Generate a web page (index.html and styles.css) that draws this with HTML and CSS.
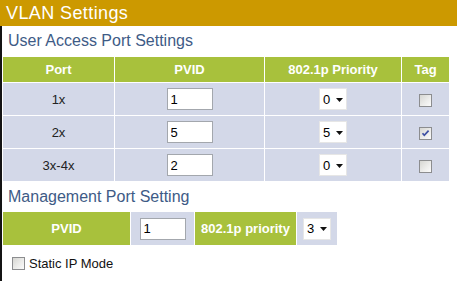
FILE: index.html
```html
<!DOCTYPE html>
<html>
<head>
<meta charset="utf-8">
<link rel="stylesheet" href="styles.css">
</head>
<body>
<div class="page-title">VLAN Settings</div>
<div class="content">
  <div class="section-title">User Access Port Settings</div>
  <table class="grid">
    <tr>
      <th class="c-port">Port</th>
      <th class="c-pvid">PVID</th>
      <th class="c-prio">802.1p Priority</th>
      <th class="c-tag">Tag</th>
    </tr>
    <tr>
      <td>1x</td>
      <td><input class="txt" type="text" value="1"></td>
      <td><div class="sel"><span>0</span><svg width="7" height="4" viewBox="0 0 7 4"><path d="M0 0H7L3.5 4Z" fill="#111"/></svg></div></td>
      <td><span class="chk"></span></td>
    </tr>
    <tr>
      <td>2x</td>
      <td><input class="txt" type="text" value="5"></td>
      <td><div class="sel"><span>5</span><svg width="7" height="4" viewBox="0 0 7 4"><path d="M0 0H7L3.5 4Z" fill="#111"/></svg></div></td>
      <td><span class="chk"><svg width="11" height="11" viewBox="0 0 11 11"><path d="M2.5 5.2L4.3 7.3L8.6 2.6" fill="none" stroke="#3d4fa3" stroke-width="1.7"/></svg></span></td>
    </tr>
    <tr>
      <td>3x-4x</td>
      <td><input class="txt" type="text" value="2"></td>
      <td><div class="sel"><span>0</span><svg width="7" height="4" viewBox="0 0 7 4"><path d="M0 0H7L3.5 4Z" fill="#111"/></svg></div></td>
      <td><span class="chk"></span></td>
    </tr>
  </table>
  <div class="section-title mgmt">Management Port Setting</div>
  <table class="grid mgmt-table">
    <tr>
      <th class="m-pvid">PVID</th>
      <td class="m-input"><input class="txt" type="text" value="1"></td>
      <th class="m-prio">802.1p priority</th>
      <td class="m-sel"><div class="sel"><span>3</span><svg width="7" height="4" viewBox="0 0 7 4"><path d="M0 0H7L3.5 4Z" fill="#111"/></svg></div></td>
    </tr>
  </table>
  <label class="static-ip"><span class="chk"></span><span class="static-label">Static IP Mode</span></label>
</div>
</body>
</html>
```
FILE: styles.css
```css
html, body {
  margin: 0;
  padding: 0;
  background: #fff;
  font-family: "Liberation Sans", Arial, sans-serif;
  width: 457px;
  height: 281px;
  overflow: hidden;
}

.page-title {
  height: 26px;
  line-height: 26px;
  background: #cc9900;
  color: #fff;
  font-size: 18px;
  letter-spacing: 0.4px;
  padding-left: 6px;
}

.content {
  border-left: 2px solid #141414;
  height: 255px;
}

.section-title {
  height: 30px;
  line-height: 30px;
  font-size: 16px;
  color: #3e5b86;
  padding-left: 6px;
}

.section-title.mgmt {
  height: 29px;
  line-height: 29px;
}

.grid {
  border-collapse: separate;
  border-spacing: 1px;
  table-layout: fixed;
}

.grid th {
  background: #a8c13c;
  color: #fff;
  font-weight: bold;
  font-size: 13px;
  height: 25px;
  padding: 0;
  text-align: center;
}

.grid td {
  background: #d3d8e8;
  color: #222;
  font-size: 13px;
  height: 32px;
  padding: 0;
  text-align: center;
  vertical-align: middle;
}

.c-port { width: 111px; }
.c-pvid { width: 149px; }
.c-prio { width: 136px; }
.c-tag { width: 47px; }

.txt {
  box-sizing: border-box;
  width: 46px;
  height: 22px;
  border: 1px solid #a3a7ad;
  background: #fff;
  font-family: "Liberation Sans", Arial, sans-serif;
  font-size: 13px;
  color: #000;
  padding: 0 0 0 3px;
  margin: 0;
  vertical-align: middle;
}

.sel {
  box-sizing: border-box;
  display: inline-flex;
  align-items: center;
  width: 28px;
  height: 22px;
  background: #fff;
  border: 1px solid #e6e6e6;
  padding-left: 3px;
  font-size: 13px;
  color: #000;
  vertical-align: middle;
}

.sel span {
  width: 13px;
  text-align: left;
}

.sel svg {
  display: block;
  margin-top: 1px;
}

.chk {
  box-sizing: border-box;
  display: inline-flex;
  align-items: center;
  justify-content: center;
  width: 13px;
  height: 13px;
  border: 1px solid #8c8d8f;
  background: linear-gradient(135deg, #d6d6d2 0%, #ececea 55%, #fbfbfb 100%);
  vertical-align: middle;
}

.chk svg {
  display: block;
}

.mgmt-table th,
.mgmt-table td {
  height: 33px;
}

.m-pvid { width: 127px; }
.m-input { width: 63px; }
.m-prio { width: 101px; }
.m-sel { width: 40px; }

.static-ip {
  display: flex;
  align-items: center;
  margin-top: 10px;
  padding-left: 10px;
  height: 14px;
  font-size: 13px;
  color: #111;
}

.static-label {
  margin-left: 4px;
}
```
